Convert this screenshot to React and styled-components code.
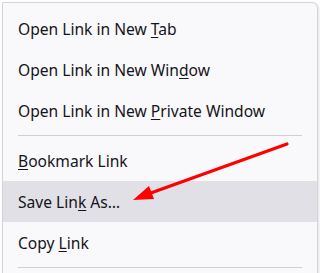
import styled, { createGlobalStyle } from "styled-components";

const Global = createGlobalStyle`
  body {
    margin: 0;
    background: #ffffff;
    overflow: hidden;
  }
`;

const Page = styled.div`
  position: relative;
  width: 320px;
  height: 273px;
  padding: 2px 2px 0 2px;
  box-sizing: border-box;
  overflow: hidden;
`;

const Menu = styled.div`
  display: flex;
  flex-direction: column;
  background: #f9f9fb;
  border: 1px solid #d4d4da;
  border-top-right-radius: 6px;
  padding-top: 5px;
  height: 300px;
  box-sizing: border-box;
  box-shadow: 1px 1px 3px rgba(0, 0, 0, 0.12);
  font-family: "Noto Sans", "Open Sans", sans-serif;
  font-size: 15.6px;
  color: #15141a;
`;

const Item = styled.div`
  display: flex;
  align-items: center;
  height: 41px;
  padding-left: 15px;
  background: ${(p) => (p.$active ? "#e0e0e6" : "transparent")};
  white-space: nowrap;
`;

const Label = styled.span`
  white-space: pre;
`;

const Key = styled.span`
  text-decoration: underline;
  text-underline-offset: 2px;
`;

const Separator = styled.div`
  height: 1px;
  margin: 4px 15px 4px 15px;
  background: #cfcfd8;
`;

const Arrow = styled.svg`
  position: absolute;
  left: 0;
  top: 0;
  pointer-events: none;
`;

export default function App() {
  return (
    <Page>
      <Global />
      <Menu>
        <Item>
          <Label>
            Open Link in New <Key>T</Key>ab
          </Label>
        </Item>
        <Item>
          <Label>
            Open Link in New Win<Key>d</Key>ow
          </Label>
        </Item>
        <Item>
          <Label>
            Open Link in New <Key>P</Key>rivate Window
          </Label>
        </Item>
        <Separator />
        <Item>
          <Label>
            <Key>B</Key>ookmark Link
          </Label>
        </Item>
        <Item $active>
          <Label>
            Save Lin<Key>k</Key> As…
          </Label>
        </Item>
        <Item>
          <Label>
            Copy <Key>L</Key>ink
          </Label>
        </Item>
        <Separator />
      </Menu>
      <Arrow width="320" height="273" viewBox="0 0 320 273">
        <line x1="287" y1="144" x2="148" y2="194" stroke="#ff0000" strokeWidth="3.2" strokeLinecap="round" />
        <polygon points="133,200 149,186 154,199" fill="#ff0000" />
      </Arrow>
    </Page>
  );
}
